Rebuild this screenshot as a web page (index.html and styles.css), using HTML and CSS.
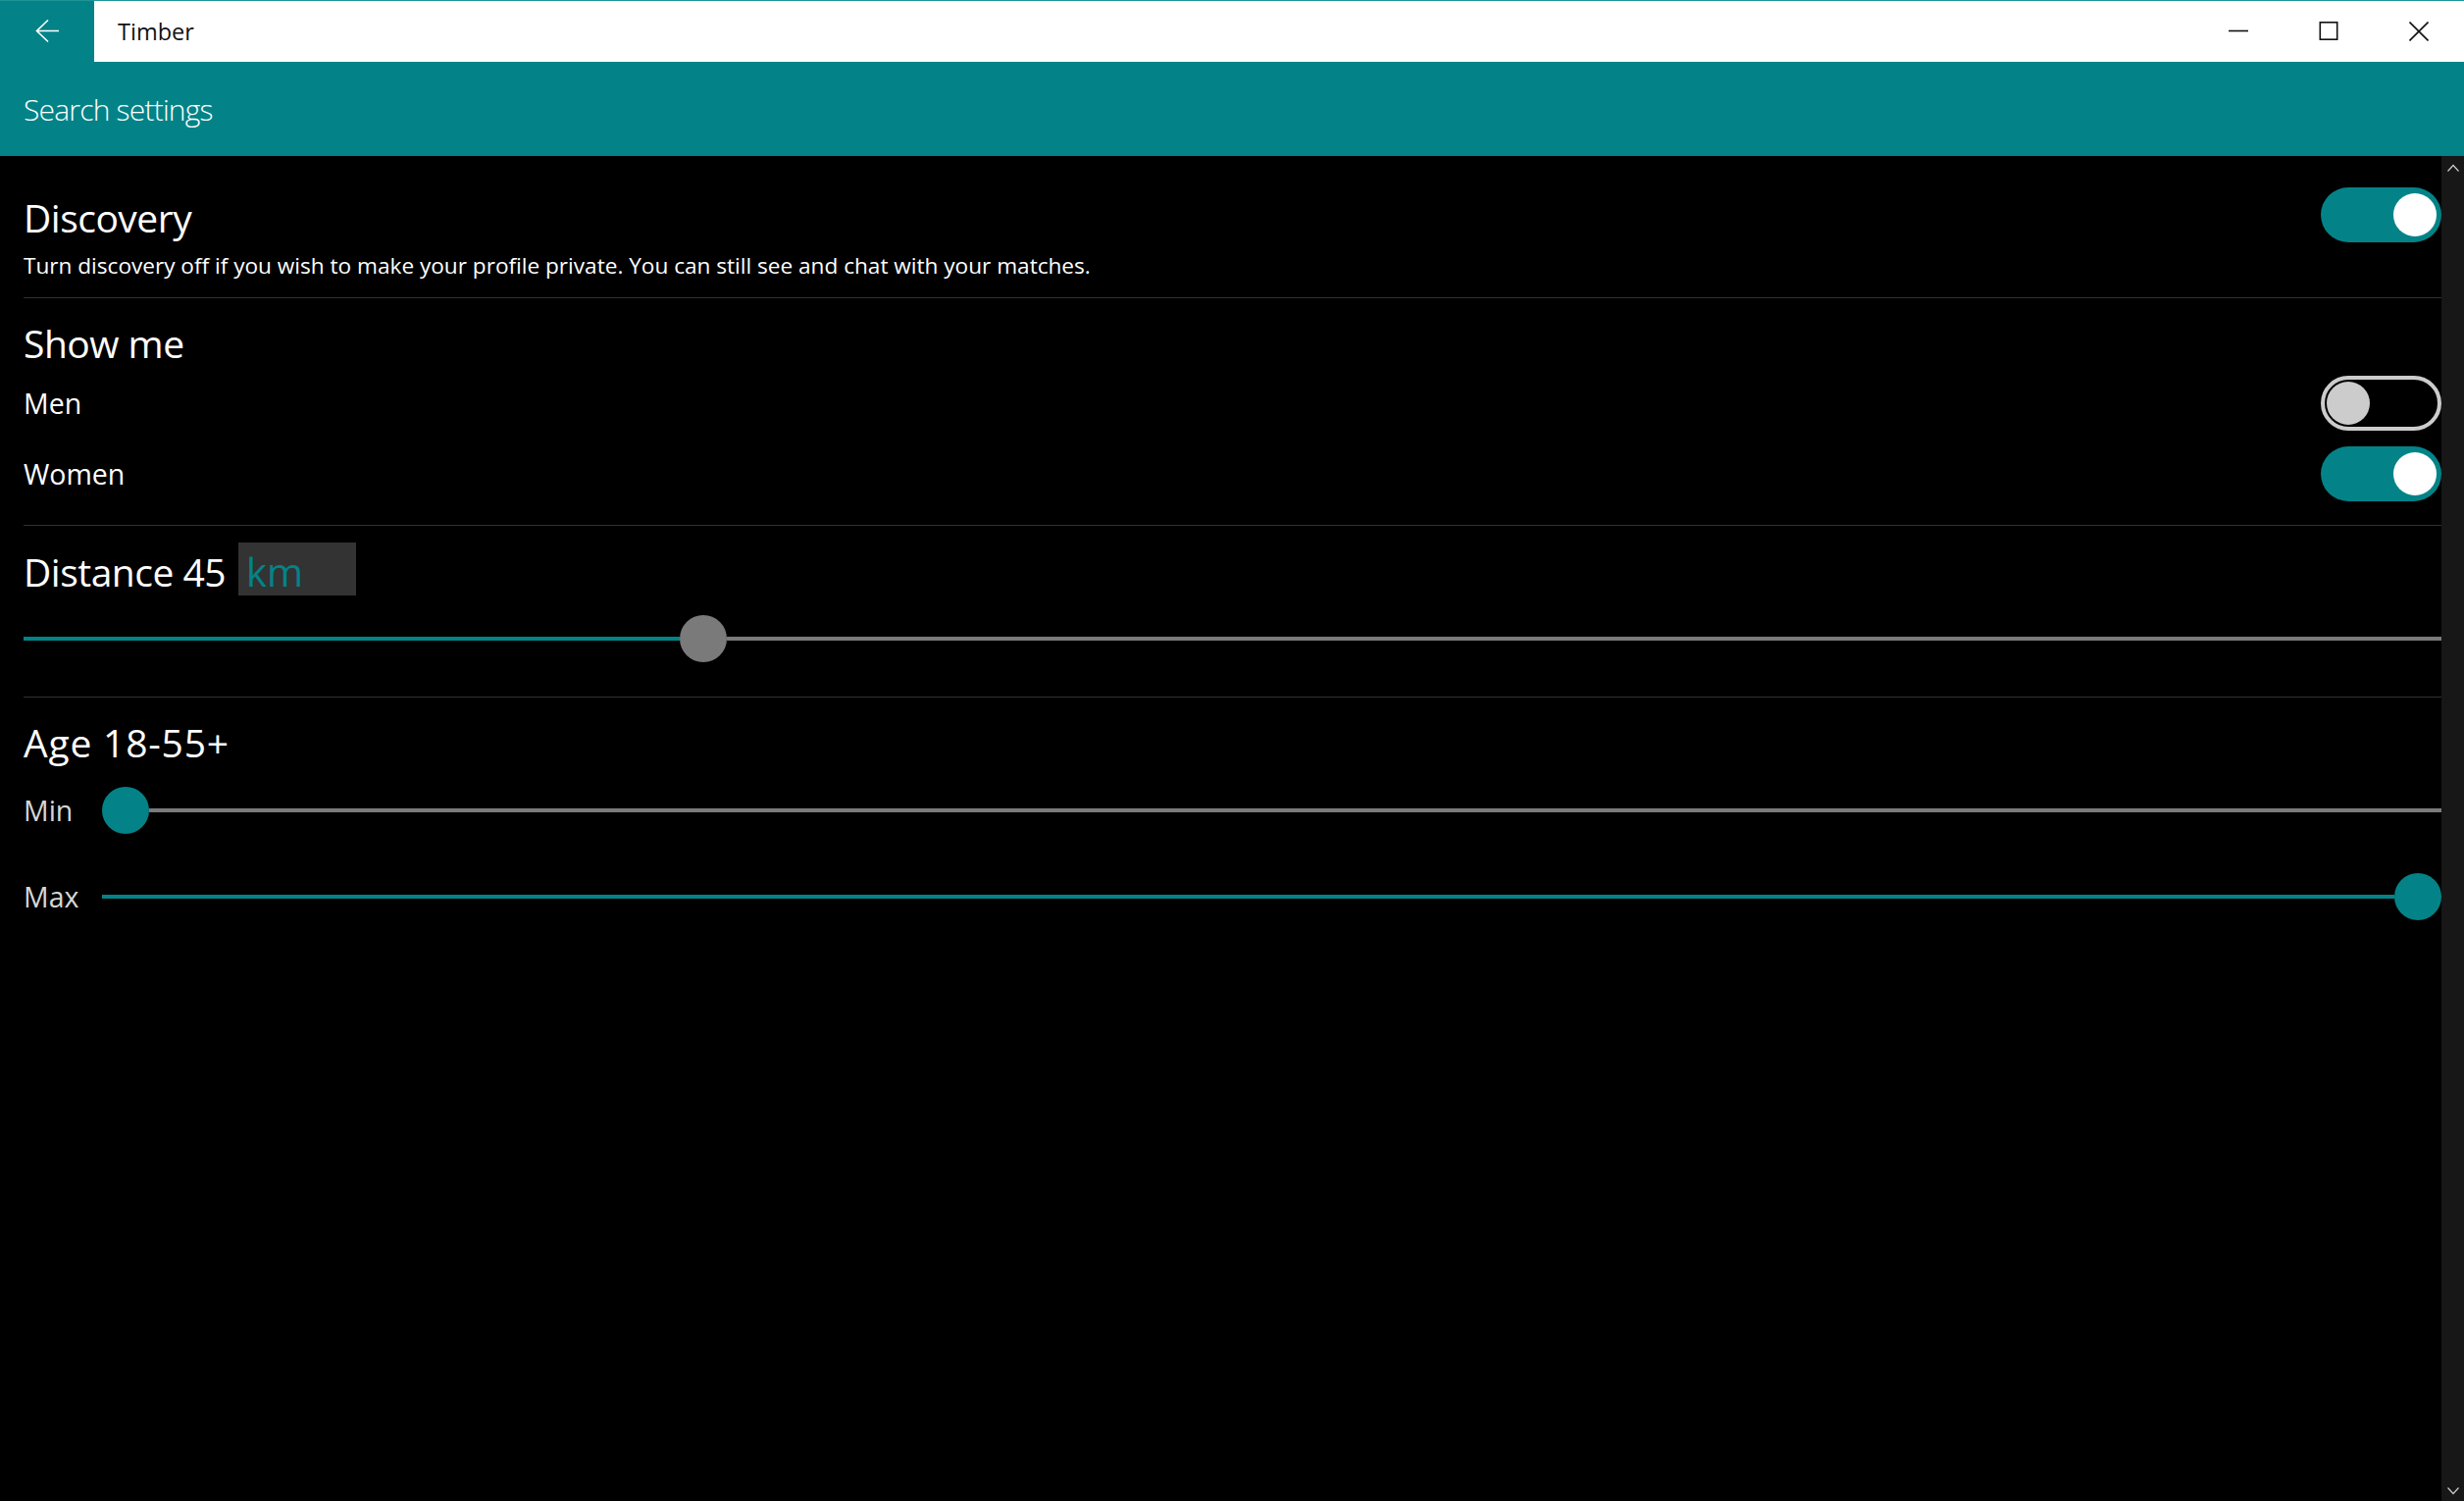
FILE: index.html
```html
<!DOCTYPE html>
<html lang="en">
<head>
  <meta charset="UTF-8">
  <title>Timber - Search settings</title>
  <link rel="stylesheet" href="styles.css">
</head>
<body>
  <div class="titlebar">
    <div class="back">
      <svg width="24" height="24" viewBox="0 0 24 24"><path d="M24 11.5H1.5 M13 0.5L1.5 11.5L13 22.5" fill="none" stroke="#fff" stroke-width="1.6"/></svg>
    </div>
    <div class="apptitle">Timber</div>
    <div class="caption">
      <div class="capbtn"><svg width="20" height="20" viewBox="0 0 20 20"><path d="M0 9.5H20" stroke="#111" stroke-width="1.6"/></svg></div>
      <div class="capbtn"><svg width="20" height="20" viewBox="0 0 20 20"><rect x="1.3" y="0.8" width="17.4" height="17.4" fill="none" stroke="#111" stroke-width="1.6"/></svg></div>
      <div class="capbtn"><svg width="20" height="20" viewBox="0 0 20 20"><path d="M0.5 0.5L19.5 19.5 M19.5 0.5L0.5 19.5" stroke="#111" stroke-width="1.6"/></svg></div>
    </div>
  </div>

  <div class="pagehead">Search settings</div>

  <div class="main">
    <div class="content">
      <div class="group first">
        <div class="row">
          <div class="heading">Discovery</div>
          <div class="toggle on"><div class="knob"></div></div>
        </div>
        <p class="desc">Turn discovery off if you wish to make your profile private. You can still see and chat with your matches.</p>
      </div>

      <div class="group show">
        <div class="heading">Show me</div>
        <div class="row option">
          <div class="label">Men</div>
          <div class="toggle off"><div class="knob"></div></div>
        </div>
        <div class="row option women">
          <div class="label">Women</div>
          <div class="toggle on"><div class="knob"></div></div>
        </div>
      </div>

      <div class="group distance">
        <div class="distrow">
          <div class="heading">Distance 45</div>
          <div class="unit">km</div>
        </div>
        <div class="slider">
          <div class="fill" style="width: calc((100% - 48px) * 0.2767)"></div>
          <div class="thumb grey"></div>
          <div class="rest"></div>
        </div>
      </div>

      <div class="group age">
        <div class="heading">Age 18-55+</div>
        <div class="agerow">
          <div class="agelabel">Min</div>
          <div class="slider">
            <div class="thumb"></div>
            <div class="rest"></div>
          </div>
        </div>
        <div class="agerow max">
          <div class="agelabel">Max</div>
          <div class="slider">
            <div class="fill grow"></div>
            <div class="thumb"></div>
          </div>
        </div>
      </div>
    </div>

    <div class="scrollbar">
      <svg width="12" height="8" viewBox="0 0 12 8"><path d="M0.5 7.5L6 1.5L11.5 7.5" fill="none" stroke="#ccc" stroke-width="1.2"/></svg>
      <svg width="12" height="8" viewBox="0 0 12 8"><path d="M0.5 0.5L6 6.5L11.5 0.5" fill="none" stroke="#ccc" stroke-width="1.2"/></svg>
    </div>
  </div>
</body>
</html>
```

FILE: styles.css
```css
body {
  margin: 0;
  width: 2512px;
  height: 1530px;
  overflow: hidden;
  background-color: #000;
  color: #fff;
  font-family: 'Open Sans', 'Noto Sans', sans-serif;
}
.titlebar {
  display: flex;
  height: 62px;
  background-color: #fff;
  border-top: 1px solid #1f9598;
}
.back {
  width: 96px;
  background-color: #038387;
  display: flex;
  align-items: center;
  justify-content: center;
}
.apptitle {
  flex: 1;
  padding-left: 24px;
  font-size: 23.5px;
  line-height: 62px;
  color: #111;
}
.caption {
  display: flex;
}
.capbtn {
  width: 92px;
  display: flex;
  align-items: center;
  justify-content: center;
}
.pagehead {
  height: 94px;
  padding: 2px 0 0 24px;
  background-color: #038387;
  font-size: 30px;
  font-weight: 300;
  letter-spacing: -0.8px;
  line-height: 94px;
}
.main {
  display: flex;
  height: 1371px;
}
.content {
  flex: 1;
  padding-left: 24px;
}
.scrollbar {
  width: 23px;
  background-color: #171717;
  display: flex;
  flex-direction: column;
  justify-content: space-between;
  align-items: center;
  padding: 8px 0 6px;
}
.group {
  border-bottom: 1px solid #303030;
}
.group.first {
  padding: 32px 0 17px;
}
.group.show {
  padding: 18px 0 24px;
}
.group.distance {
  padding: 17px 0 35px;
}
.group.age {
  border-bottom: none;
  padding-top: 18px;
}
.row {
  display: flex;
  align-items: center;
  justify-content: space-between;
  height: 56px;
}
.heading {
  font-size: 39px;
  letter-spacing: -0.5px;
  line-height: 56px;
}
.group.first .heading {
  padding-top: 6px;
  line-height: 50px;
}
.group.age .heading {
  letter-spacing: 0.8px;
}
.desc {
  margin: 9px 0 0;
  font-size: 22.6px;
  line-height: 30px;
}
.option {
  margin-top: 5px;
}
.option.women {
  margin-top: 16px;
}
.label {
  font-size: 28.5px;
}
.toggle {
  box-sizing: border-box;
  width: 123px;
  height: 56px;
  border-radius: 28px;
  display: flex;
  align-items: center;
}
.toggle .knob {
  width: 44px;
  height: 44px;
  border-radius: 50%;
}
.toggle.on {
  background-color: #038387;
  justify-content: flex-end;
  padding: 0 5px;
}
.toggle.on .knob {
  background-color: #fff;
}
.toggle.off {
  border: 4px solid #cccccc;
  padding: 0 2px;
}
.toggle.off .knob {
  background-color: #cccccc;
}
.distrow {
  display: flex;
  align-items: center;
  height: 54px;
}
.distrow .heading {
  padding-top: 6px;
  line-height: 48px;
}
.unit {
  margin-left: 13px;
  width: 120px;
  height: 54px;
  box-sizing: border-box;
  padding: 6px 0 0 8px;
  background-color: #333;
  color: #038387;
  font-size: 40px;
  line-height: 48px;
}
.slider {
  display: flex;
  align-items: center;
  height: 48px;
  flex: 1;
}
.group.distance .slider {
  margin-top: 20px;
}
.fill {
  height: 4px;
  background-color: #038387;
}
.fill.grow {
  flex: 1;
}
.rest {
  flex: 1;
  height: 4px;
  background-color: #7a7a7a;
}
.thumb {
  width: 48px;
  height: 48px;
  border-radius: 50%;
  background-color: #038387;
}
.thumb.grey {
  background-color: #7a7a7a;
}
.agerow {
  display: flex;
  align-items: center;
  margin-top: 17px;
}
.agerow.max {
  margin-top: 40px;
}
.agelabel {
  width: 80px;
  font-size: 28.5px;
  line-height: 48px;
  color: #d6d6d6;
}
```
